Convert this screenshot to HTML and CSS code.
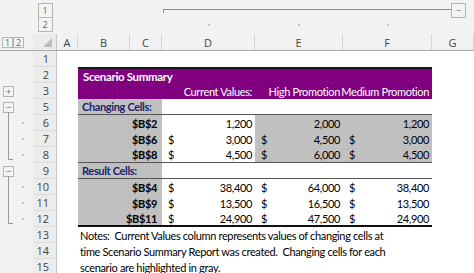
FILE: index.html
```html
<!DOCTYPE html>
<html>
<head>
    <title>Scenario Summary</title>
    <link rel="stylesheet" href="styles.css">
</head>
<body>
    <div class="outline-top">
        <div class="levels">
            <span class="btn big">1</span>
            <span class="btn big">2</span>
        </div>
        <div class="col-group">
            <div class="bracket"></div>
            <span class="btn big">&minus;</span>
        </div>
        <div class="tick d"><i class="dot"></i></div>
        <div class="tick e"><i class="dot"></i></div>
        <div class="tick f"><i class="dot"></i></div>
    </div>

    <div class="col-head">
        <div class="row-levels">
            <span class="btn">1</span>
            <span class="btn">2</span>
        </div>
        <div class="corner"><i class="select-all"></i></div>
        <div class="letter">A</div>
        <div class="letter">B</div>
        <div class="letter">C</div>
        <div class="letter">D</div>
        <div class="letter">E</div>
        <div class="letter">F</div>
        <div class="letter">G</div>
    </div>

    <div class="row">
        <div class="ol"></div><div class="rn">1</div>
    </div>
    <div class="row">
        <div class="ol"></div><div class="rn">2</div><div class="cell"></div>
        <div class="cell span-bf purple top-rule title">Scenario Summary</div>
    </div>
    <div class="row">
        <div class="ol"><span class="btn">+</span></div><div class="rn">3</div><div class="cell"></div>
        <div class="cell purple"></div>
        <div class="cell purple right">Current Values:</div>
        <div class="cell purple right">High Promotion</div>
        <div class="cell purple right">Medium Promotion</div>
    </div>
    <div class="row">
        <div class="ol"><span class="btn">&minus;</span></div><div class="rn">5</div><div class="cell"></div>
        <div class="cell shade section rule">Changing Cells:</div>
        <div class="cell rule"></div>
        <div class="cell rule"></div>
        <div class="cell rule"></div>
    </div>
    <div class="row">
        <div class="ol"><i class="stem first"></i><i class="dot"></i></div><div class="rn">6</div><div class="cell"></div>
        <div class="cell shade label">$B$2</div>
        <div class="cell acct"><span class="num">1,200</span></div>
        <div class="cell shade acct"><span class="num">2,000</span></div>
        <div class="cell shade acct"><span class="num">1,200</span></div>
    </div>
    <div class="row">
        <div class="ol"><i class="stem"></i><i class="dot"></i></div><div class="rn">7</div><div class="cell"></div>
        <div class="cell shade label">$B$6</div>
        <div class="cell acct"><span>$</span><span class="num">3,000</span></div>
        <div class="cell shade acct"><span>$</span><span class="num">4,500</span></div>
        <div class="cell shade acct"><span>$</span><span class="num">3,000</span></div>
    </div>
    <div class="row">
        <div class="ol"><i class="stem end"></i><i class="dot"></i></div><div class="rn">8</div><div class="cell"></div>
        <div class="cell shade label rule">$B$8</div>
        <div class="cell acct rule"><span>$</span><span class="num">4,500</span></div>
        <div class="cell shade acct rule"><span>$</span><span class="num">6,000</span></div>
        <div class="cell shade acct rule"><span>$</span><span class="num">4,500</span></div>
    </div>
    <div class="row">
        <div class="ol"><span class="btn">&minus;</span></div><div class="rn">9</div><div class="cell"></div>
        <div class="cell shade section rule">Result Cells:</div>
        <div class="cell rule"></div>
        <div class="cell rule"></div>
        <div class="cell rule"></div>
    </div>
    <div class="row">
        <div class="ol"><i class="stem first"></i><i class="dot"></i></div><div class="rn">10</div><div class="cell"></div>
        <div class="cell shade label">$B$4</div>
        <div class="cell acct"><span>$</span><span class="num">38,400</span></div>
        <div class="cell acct"><span>$</span><span class="num">64,000</span></div>
        <div class="cell acct"><span>$</span><span class="num">38,400</span></div>
    </div>
    <div class="row">
        <div class="ol"><i class="stem"></i><i class="dot"></i></div><div class="rn">11</div><div class="cell"></div>
        <div class="cell shade label">$B$9</div>
        <div class="cell acct"><span>$</span><span class="num">13,500</span></div>
        <div class="cell acct"><span>$</span><span class="num">16,500</span></div>
        <div class="cell acct"><span>$</span><span class="num">13,500</span></div>
    </div>
    <div class="row">
        <div class="ol"><i class="stem end"></i><i class="dot"></i></div><div class="rn">12</div><div class="cell"></div>
        <div class="cell shade label heavy">$B$11</div>
        <div class="cell acct heavy"><span>$</span><span class="num">24,900</span></div>
        <div class="cell acct heavy"><span>$</span><span class="num">47,500</span></div>
        <div class="cell acct heavy"><span>$</span><span class="num">24,900</span></div>
    </div>
    <div class="row">
        <div class="ol"></div><div class="rn">13</div><div class="cell"></div>
        <div class="cell note">Notes:&nbsp; Current Values column represents values of changing cells at</div>
    </div>
    <div class="row">
        <div class="ol"></div><div class="rn">14</div><div class="cell"></div>
        <div class="cell note">time Scenario Summary Report was created.&nbsp; Changing cells for each</div>
    </div>
    <div class="row">
        <div class="ol"></div><div class="rn">15</div><div class="cell"></div>
        <div class="cell note">scenario are highlighted in gray.</div>
    </div>
</body>
</html>
```

FILE: styles.css
```css
body {
    margin: 0;
    width: 474px;
    height: 273px;
    overflow: hidden;
    background-color: #ffffff;
    color: #000000;
    font-family: 'Lato', 'Liberation Sans', sans-serif;
    font-size: 11px;
    letter-spacing: -0.35px;
}

* {
    box-sizing: border-box;
}

/* outline buttons */
.btn {
    display: flex;
    align-items: center;
    justify-content: center;
    width: 11px;
    height: 11px;
    border: 1px solid #b4b4b4;
    background-color: #f4f4f4;
    color: #666666;
    font-family: 'Open Sans', sans-serif;
    font-size: 9px;
    letter-spacing: 0;
    line-height: 1;
}

.btn.big {
    width: 15px;
    height: 15px;
}

/* column outline strip */
.outline-top {
    display: grid;
    grid-template-columns: 33px 24px 21px 52px 32px 93px 88px 89px 1fr;
    grid-template-rows: 18px 16px;
    background-color: #f2f2f2;
}

.levels {
    grid-column: 2;
    grid-row: 1 / 3;
    display: flex;
    flex-direction: column;
    align-items: center;
    padding-top: 3px;
}

.levels .btn + .btn {
    margin-top: -1px;
}

.col-group {
    grid-column: 6 / 10;
    grid-row: 1;
    display: flex;
    align-items: flex-start;
    padding: 3px 8px 0 1px;
}

.bracket {
    flex: 1;
    height: 4px;
    margin-top: 6px;
    border-top: 1px solid #8c8c8c;
    border-left: 1px solid #8c8c8c;
}

.tick {
    grid-row: 2;
    display: flex;
    justify-content: center;
    padding-top: 6px;
}

.tick.d { grid-column: 6; }
.tick.e { grid-column: 7; }
.tick.f { grid-column: 8; }

.dot {
    display: block;
    width: 2px;
    height: 2px;
    background-color: #c4c4c4;
}

/* column letters */
.col-head {
    display: grid;
    grid-template-columns: 33px 24px 21px 52px 32px 93px 88px 89px 1fr;
    height: 17px;
    background-color: #f2f2f2;
    border-bottom: 1px solid #ababab;
    color: #444444;
    font-family: 'Open Sans', sans-serif;
    font-size: 11px;
    letter-spacing: 0;
}

.row-levels {
    display: flex;
    align-items: center;
    padding-left: 2px;
}

.corner {
    display: flex;
    justify-content: flex-end;
    align-items: flex-end;
    padding: 0 4px 3px 0;
    background-color: #ececec;
    border-right: 1px solid #c6c6c6;
}

.select-all {
    width: 0;
    height: 0;
    border-left: 9px solid transparent;
    border-bottom: 9px solid #bcbcbc;
}

.letter {
    display: flex;
    align-items: center;
    justify-content: center;
    border-right: 1px solid #d6d6d6;
}

/* sheet rows */
.row {
    display: grid;
    grid-template-columns: 33px 24px 21px 84px 93px 88px 89px 1fr;
    height: 16px;
}

.ol {
    display: flex;
    align-items: center;
    background-color: #f2f2f2;
}

.ol .btn {
    margin-left: 3px;
}

.stem {
    display: block;
    align-self: stretch;
    width: 5px;
    margin-left: 8px;
    border-left: 1px solid #9a9a9a;
}

.stem.first {
    margin-top: -3px;
}

.stem.end {
    margin-bottom: 3px;
    border-bottom: 1px solid #9a9a9a;
}

.ol .dot {
    margin-left: 9px;
}

.rn {
    display: flex;
    align-items: center;
    justify-content: flex-end;
    padding-right: 7px;
    background-color: #ececec;
    border-right: 1px solid #c6c6c6;
    border-bottom: 1px solid #dcdcdc;
    color: #444444;
    font-family: 'Open Sans', sans-serif;
    font-size: 11px;
    letter-spacing: 0;
}

.cell {
    display: flex;
    align-items: center;
    white-space: nowrap;
}

.span-bf {
    grid-column: 4 / 8;
}

.purple {
    background-color: #800080;
    color: #ffffff;
}

.top-rule {
    border-top: 2px solid #1a1a1a;
}

.title {
    padding-left: 5px;
    font-weight: bold;
    font-size: 11.5px;
}

.right {
    justify-content: flex-end;
    padding-right: 3px;
}

.shade {
    background-color: #c0c0c0;
}

.section {
    padding-left: 4px;
    color: #1b2272;
    font-weight: bold;
}

.label {
    justify-content: flex-end;
    padding-right: 5px;
    font-weight: bold;
}

.acct {
    padding: 0 3px 0 6px;
}

.acct .num {
    margin-left: auto;
}

.rule {
    border-bottom: 1px solid #555555;
}

.heavy {
    border-bottom: 2px solid #111111;
}

.note {
    grid-column: 4 / 9;
    padding-left: 2px;
}
```
